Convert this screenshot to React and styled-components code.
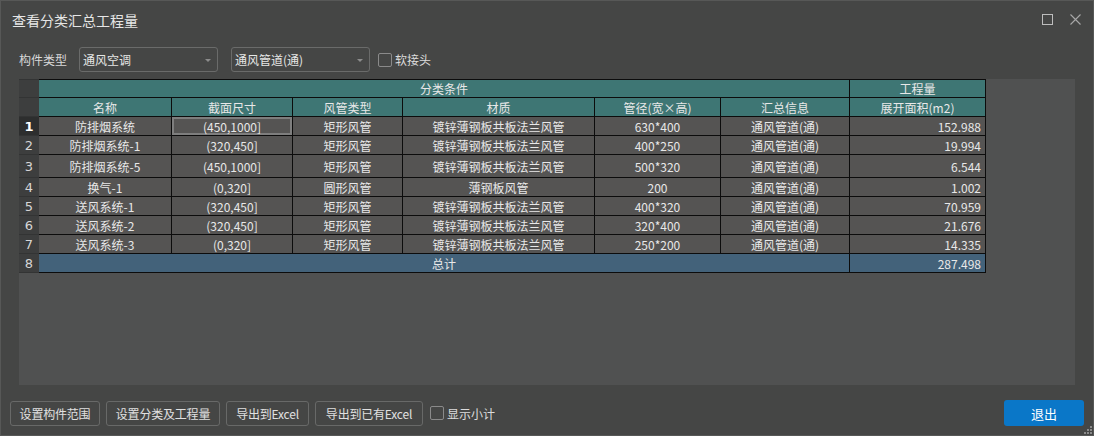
import React from "react";
import styled, { createGlobalStyle } from "styled-components";

const GlobalStyle = createGlobalStyle`
  html, body { margin: 0; padding: 0; background: #454645; }
  * { box-sizing: border-box; }
`;

const FONT = `"Noto Sans CJK SC", "Noto Sans", sans-serif`;

const Window = styled.div`
  width: 1094px;
  height: 436px;
  background: #454645;
  border: 1px solid #575857;
  display: flex;
  flex-direction: column;
  font-family: ${FONT};
  color: #e4e4e4;
  position: relative;
  overflow: hidden;
`;

const TitleBar = styled.div`
  height: 37px;
  display: flex;
  align-items: center;
  justify-content: space-between;
  padding: 0 12px 0 11px;
`;

const Title = styled.div`
  font-size: 14px;
  color: #e6e6e6;
`;

const Controls = styled.div`
  display: flex;
  align-items: center;
  gap: 17px;
`;

const Toolbar = styled.div`
  margin-top: 9px;
  height: 25px;
  display: flex;
  align-items: center;
  padding-left: 18px;
  font-size: 12px;
`;

const Label = styled.span`
  color: #d8d8d8;
  margin-right: 12px;
`;

const Combo = styled.div`
  position: relative;
  width: 139px;
  height: 25px;
  border: 1px solid #6a6b6a;
  border-radius: 3px;
  display: flex;
  align-items: center;
  padding-left: 3px;
  margin-right: ${(p) => p.$mr || 0}px;
  color: #e6e6e6;
  font-size: 12px;
  &::after {
    content: "";
    position: absolute;
    right: 6px;
    top: 11px;
    border-left: 3px solid transparent;
    border-right: 3px solid transparent;
    border-top: 3px solid #8c8c8c;
  }
`;

const Check = styled.span`
  display: inline-block;
  width: 14px;
  height: 14px;
  border: 1px solid #8a8a8a;
  border-radius: 2px;
  margin-right: 3px;
`;

const CheckWrap = styled.label`
  display: flex;
  align-items: center;
  font-size: 12px;
  color: #dcdcdc;
  margin-left: ${(p) => p.$ml || 0}px;
`;

const GridArea = styled.div`
  margin: 7px 18px 0 18px;
  height: 306px;
  background: #505151;
`;

const Grid = styled.div`
  display: grid;
  grid-template-columns: 20px 133px 121px 110px 192px 126px 129px 136px;
  grid-template-rows: 19px 19px 19px 19px 23px 19px 19px 19px 19px 19px;
  width: 967px;
  font-size: 12px;
`;

const RowHead = styled.div`
  background: ${(p) => (p.$active ? "#2d2e2e" : "#3d3e3e")};
  border-bottom: 1px solid #333434;
  border-top: ${(p) => (p.$top ? "1px solid #333434" : "none")};
  display: flex;
  align-items: center;
  justify-content: center;
  color: ${(p) => (p.$active ? "#ffffff" : "#d6d6d6")};
  font-weight: ${(p) => (p.$active ? 700 : 400)};
  font-size: 13px;
  font-family: "DejaVu Sans", "Liberation Sans", sans-serif;
`;

const Cell = styled.div`
  grid-column: ${(p) => p.$span || "auto"};
  background: ${(p) =>
    p.$kind === "head" ? "#3e7674" : p.$kind === "total" ? "#43627a" : "#555453"};
  border-right: 1px solid #0c0c0c;
  border-bottom: 1px solid #0c0c0c;
  border-top: ${(p) => (p.$top ? "1px solid #0c0c0c" : "none")};
  display: flex;
  align-items: center;
  justify-content: ${(p) => (p.$right ? "flex-end" : "center")};
  padding-right: ${(p) => (p.$right ? "4px" : "0")};
  color: #e8e8e8;
  white-space: nowrap;
  box-shadow: ${(p) => (p.$sel ? "inset 0 0 0 2px #7e7e7e" : "none")};
`;

const BottomBar = styled.div`
  margin-top: 15px;
  height: 26px;
  display: flex;
  align-items: center;
  padding: 0 9px;
`;

const Button = styled.button`
  width: ${(p) => p.$w}px;
  height: 25px;
  padding: 0;
  margin-right: 6px;
  background: transparent;
  border: 1px solid #686968;
  border-radius: 3px;
  color: #e0e0e0;
  font-family: ${FONT};
  font-size: 12px;
  letter-spacing: -0.2px;
  white-space: nowrap;
  cursor: pointer;
`;

const PrimaryButton = styled.button`
  margin-left: auto;
  width: 80px;
  height: 26px;
  background: #0a77c8;
  border: none;
  border-radius: 3px;
  color: #ffffff;
  font-family: ${FONT};
  font-size: 13px;
`;

const Grip = styled.svg`
  position: absolute;
  right: 1px;
  bottom: 1px;
`;

const rows = [
  ["防排烟系统", "(450,1000]", "矩形风管", "镀锌薄钢板共板法兰风管", "630*400", "通风管道(通)", "152.988"],
  ["防排烟系统-1", "(320,450]", "矩形风管", "镀锌薄钢板共板法兰风管", "400*250", "通风管道(通)", "19.994"],
  ["防排烟系统-5", "(450,1000]", "矩形风管", "镀锌薄钢板共板法兰风管", "500*320", "通风管道(通)", "6.544"],
  ["换气-1", "(0,320]", "圆形风管", "薄钢板风管", "200", "通风管道(通)", "1.002"],
  ["送风系统-1", "(320,450]", "矩形风管", "镀锌薄钢板共板法兰风管", "400*320", "通风管道(通)", "70.959"],
  ["送风系统-2", "(320,450]", "矩形风管", "镀锌薄钢板共板法兰风管", "320*400", "通风管道(通)", "21.676"],
  ["送风系统-3", "(0,320]", "矩形风管", "镀锌薄钢板共板法兰风管", "250*200", "通风管道(通)", "14.335"],
];

const headers = ["名称", "截面尺寸", "风管类型", "材质", "管径(宽×高)", "汇总信息", "展开面积(m2)"];

export default function App() {
  return (
    <>
      <GlobalStyle />
      <Window>
        <TitleBar>
          <Title>查看分类汇总工程量</Title>
          <Controls>
            <svg width="11" height="11" viewBox="0 0 11 11">
              <rect x="0.5" y="0.5" width="10" height="10" fill="none" stroke="#bdbdbd" strokeWidth="1" />
            </svg>
            <svg width="11" height="11" viewBox="0 0 11 11">
              <path d="M0.5 0.5 L10.5 10.5 M10.5 0.5 L0.5 10.5" stroke="#a8a8a8" strokeWidth="1.1" />
            </svg>
          </Controls>
        </TitleBar>

        <Toolbar>
          <Label>构件类型</Label>
          <Combo $mr={13}>通风空调</Combo>
          <Combo>通风管道(通)</Combo>
          <CheckWrap $ml={8}>
            <Check />
            软接头
          </CheckWrap>
        </Toolbar>

        <GridArea>
          <Grid>
            <RowHead $top />
            <Cell $kind="head" $span="2 / 8" $top>分类条件</Cell>
            <Cell $kind="head" $top>工程量</Cell>

            <RowHead />
            {headers.map((h) => (
              <Cell key={h} $kind="head">{h}</Cell>
            ))}

            {rows.map((r, i) => (
              <React.Fragment key={i}>
                <RowHead $active={i === 0}>{i + 1}</RowHead>
                {r.map((v, j) => (
                  <Cell key={j} $right={j === 6} $sel={i === 0 && j === 1}>
                    {v}
                  </Cell>
                ))}
              </React.Fragment>
            ))}

            <RowHead>8</RowHead>
            <Cell $kind="total" $span="2 / 8">总计</Cell>
            <Cell $kind="total" $right>287.498</Cell>
          </Grid>
        </GridArea>

        <BottomBar>
          <Button $w={90}>设置构件范围</Button>
          <Button $w={114}>设置分类及工程量</Button>
          <Button $w={83}>导出到Excel</Button>
          <Button $w={108}>导出到已有Excel</Button>
          <CheckWrap $ml={1}>
            <Check />
            显示小计
          </CheckWrap>
          <PrimaryButton>退出</PrimaryButton>
        </BottomBar>

        <Grip width="8" height="8" viewBox="0 0 8 8">
          <rect x="6" y="0" width="2" height="2" fill="#8a8a8a" />
          <rect x="3" y="3" width="2" height="2" fill="#8a8a8a" />
          <rect x="6" y="3" width="2" height="2" fill="#8a8a8a" />
          <rect x="0" y="6" width="2" height="2" fill="#8a8a8a" />
          <rect x="3" y="6" width="2" height="2" fill="#8a8a8a" />
          <rect x="6" y="6" width="2" height="2" fill="#8a8a8a" />
        </Grip>
      </Window>
    </>
  );
}
